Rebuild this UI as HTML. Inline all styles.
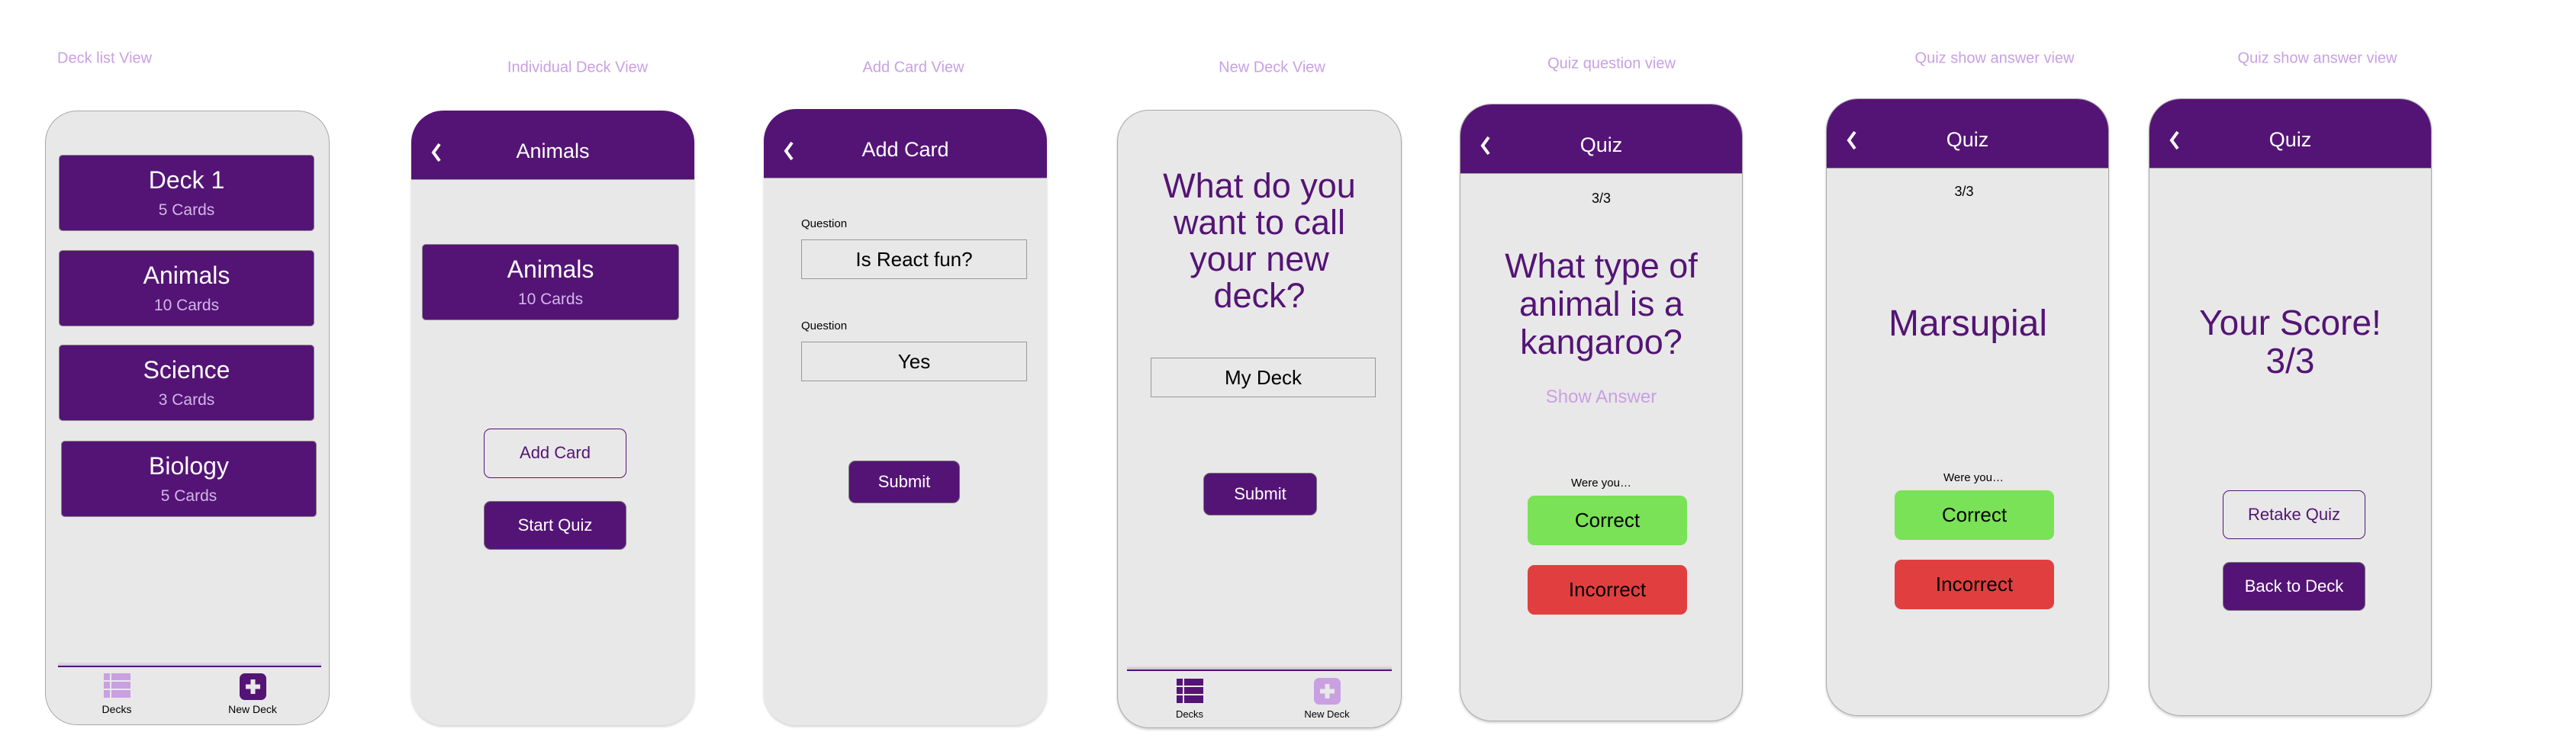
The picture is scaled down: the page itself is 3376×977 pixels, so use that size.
<!DOCTYPE html>
<html><head><meta charset="utf-8"><style>
*{margin:0;padding:0;box-sizing:border-box}
body{width:3376px;height:977px;background:#fff;position:relative;overflow:hidden;font-family:"Liberation Sans",Arial,sans-serif}
.lbl{position:absolute;color:#c9a0e2;font-size:20px;white-space:nowrap;transform:translate(-50%,-50%)}
.ph{position:absolute;background:#e8e8e8;border:1.5px solid #a8a8a8;border-radius:42px;overflow:hidden;box-shadow:0 2px 3px rgba(0,0,0,.18)}
.hd{position:absolute;left:0;top:0;width:100%;background:#541475;border-bottom:1.5px solid #9a9a9a}
.hd .t{position:absolute;left:0;right:0;text-align:center;color:#fff;font-size:27px}
.hd svg{position:absolute;left:25px}
.a{position:absolute}
.c{text-align:center;white-space:nowrap}
.card{position:absolute;background:#541475;border:1px solid #888;border-radius:5px;color:#fff;text-align:center}
.card .t1{position:absolute;left:0;right:0;top:14px;font-size:32px}
.card .t2{position:absolute;left:0;right:0;top:60px;font-size:21px;color:#d3b6ea}
.btn{position:absolute;border-radius:9px;text-align:center;font-size:22px}
.pb{background:#541475;color:#fff;border:1px solid #777}
.ob{border:1.5px solid #541475;color:#541475}
.box{position:absolute;border:1.5px solid #999;text-align:center;font-size:26px;color:#000}
.g{background:#7ae256;color:#000;font-size:26px}
.r{background:#e13f3f;color:#000;font-size:26px}
.pq{color:#541475}
</style></head><body>

<div class="lbl" style="left:75px;top:77px;transform:translate(0,-50%)">Deck list View</div>
<div class="lbl" style="left:757px;top:89px">Individual Deck View</div>
<div class="lbl" style="left:1197px;top:89px">Add Card View</div>
<div class="lbl" style="left:1667px;top:89px">New Deck View</div>
<div class="lbl" style="left:2112px;top:84px">Quiz question view</div>
<div class="lbl" style="left:2614px;top:77px">Quiz show answer view</div>
<div class="lbl" style="left:3037px;top:77px">Quiz show answer view</div>

<!-- Panel 1 -->
<div class="ph" style="left:59px;top:145px;width:373px;height:806px;box-shadow:none">
  <div class="card" style="left:17px;top:57px;width:335px;height:100px"><div class="t1">Deck 1</div><div class="t2">5 Cards</div></div>
  <div class="card" style="left:17px;top:182px;width:335px;height:100px"><div class="t1">Animals</div><div class="t2">10 Cards</div></div>
  <div class="card" style="left:17px;top:306px;width:335px;height:100px"><div class="t1">Science</div><div class="t2">3 Cards</div></div>
  <div class="card" style="left:20px;top:432px;width:335px;height:100px"><div class="t1">Biology</div><div class="t2">5 Cards</div></div>
  <div class="a" style="left:16px;top:722px;width:345px;height:7px;background:linear-gradient(rgba(84,20,117,0),rgba(84,20,117,.25))"></div>
  <div class="a" style="left:16px;top:727px;width:345px;height:2px;background:#541475"></div>
  <svg class="a" style="left:76px;top:737px" width="35" height="32" viewBox="0 0 35 32"><g fill="#c9a0e2"><rect x="0" y="0" width="8" height="9"/><rect x="10" y="0" width="25" height="9"/><rect x="0" y="11" width="8" height="9"/><rect x="10" y="11" width="25" height="9"/><rect x="0" y="22" width="8" height="10"/><rect x="10" y="22" width="25" height="10"/></g></svg>
  <div class="a c" style="left:53px;width:80px;top:776px;font-size:14px">Decks</div>
  <svg class="a" style="left:254px;top:737px" width="35" height="35" viewBox="0 0 35 35"><rect width="35" height="35" rx="7" fill="#541475"/><path d="M17.5 8v19M8 17.5h19" stroke="#e8e8e8" stroke-width="6"/></svg>
  <div class="a c" style="left:221px;width:100px;top:776px;font-size:14px">New Deck</div>
</div>

<!-- Panel 2 -->
<div class="ph" style="left:539px;top:145px;width:371px;height:806px;border:none">
  <div class="hd" style="height:91px"><svg style="top:41px" width="16" height="28" viewBox="0 0 16 28"><path d="M12 3L4 14l8 11" stroke="#fff" stroke-width="4" fill="none"/></svg><div class="t" style="top:38px">Animals</div></div>
  <div class="card" style="left:14px;top:175px;width:337px;height:100px"><div class="t1">Animals</div><div class="t2">10 Cards</div></div>
  <div class="btn ob" style="left:95px;top:417px;width:187px;height:65px;line-height:62px">Add Card</div>
  <div class="btn pb" style="left:95px;top:512px;width:187px;height:64px;line-height:62px">Start Quiz</div>
</div>

<!-- Panel 3 -->
<div class="ph" style="left:1001px;top:143px;width:371px;height:808px;border:none">
  <div class="hd" style="height:91px"><svg style="top:41px" width="16" height="28" viewBox="0 0 16 28"><path d="M12 3L4 14l8 11" stroke="#fff" stroke-width="4" fill="none"/></svg><div class="t" style="top:38px">Add Card</div></div>
  <div class="a" style="left:49px;top:142px;font-size:15px">Question</div>
  <div class="box" style="left:49px;top:171px;width:296px;height:52px;line-height:50px">Is React fun?</div>
  <div class="a" style="left:49px;top:276px;font-size:15px">Question</div>
  <div class="box" style="left:49px;top:305px;width:296px;height:52px;line-height:50px">Yes</div>
  <div class="btn pb" style="left:111px;top:461px;width:146px;height:56px;line-height:54px">Submit</div>
</div>

<!-- Panel 4 -->
<div class="ph" style="left:1464px;top:144px;width:373px;height:811px">
  <div class="a c pq" style="left:0;right:0;top:75px;font-size:45px;line-height:48px">What do you<br>want to call<br>your new<br>deck?</div>
  <div class="box" style="left:43px;top:324px;width:295px;height:52px;line-height:50px">My Deck</div>
  <div class="btn pb" style="left:112px;top:475px;width:149px;height:56px;line-height:54px">Submit</div>
  <div class="a" style="left:12px;top:728px;width:347px;height:6px;background:linear-gradient(rgba(84,20,117,0),rgba(84,20,117,.25))"></div>
  <div class="a" style="left:12px;top:733px;width:347px;height:2px;background:#541475"></div>
  <svg class="a" style="left:77px;top:745px" width="35" height="32" viewBox="0 0 35 32"><g fill="#541475"><rect x="0" y="0" width="8" height="9"/><rect x="10" y="0" width="25" height="9"/><rect x="0" y="11" width="8" height="9"/><rect x="10" y="11" width="25" height="9"/><rect x="0" y="22" width="8" height="10"/><rect x="10" y="22" width="25" height="10"/></g></svg>
  <div class="a c" style="left:54px;width:80px;top:784px;font-size:13px">Decks</div>
  <svg class="a" style="left:257px;top:744px" width="35" height="35" viewBox="0 0 35 35"><rect width="35" height="35" rx="7" fill="#c9a0e2"/><path d="M17.5 8v19M8 17.5h19" stroke="#e8e8e8" stroke-width="6"/></svg>
  <div class="a c" style="left:224px;width:100px;top:784px;font-size:13px">New Deck</div>
</div>

<!-- Panel 5 -->
<div class="ph" style="left:1913px;top:136px;width:371px;height:810px">
  <div class="hd" style="height:91px"><svg style="top:40px" width="16" height="28" viewBox="0 0 16 28"><path d="M12 3L4 14l8 11" stroke="#fff" stroke-width="4" fill="none"/></svg><div class="t" style="top:38px">Quiz</div></div>
  <div class="a c" style="left:0;right:0;top:113px;font-size:18px">3/3</div>
  <div class="a c pq" style="left:0;right:0;top:187px;font-size:45px;line-height:50px">What type of<br>animal is a<br>kangaroo?</div>
  <div class="a c" style="left:0;right:0;top:370px;font-size:24px;color:#c9a0e2">Show Answer</div>
  <div class="a c" style="left:0;right:0;top:488px;font-size:15px">Were you…</div>
  <div class="btn g" style="left:88px;top:513px;width:209px;height:65px;line-height:65px">Correct</div>
  <div class="btn r" style="left:88px;top:604px;width:209px;height:65px;line-height:65px">Incorrect</div>
</div>

<!-- Panel 6 -->
<div class="ph" style="left:2393px;top:129px;width:371px;height:810px">
  <div class="hd" style="height:91px"><svg style="top:40px" width="16" height="28" viewBox="0 0 16 28"><path d="M12 3L4 14l8 11" stroke="#fff" stroke-width="4" fill="none"/></svg><div class="t" style="top:38px">Quiz</div></div>
  <div class="a c" style="left:0;width:360px;top:111px;font-size:18px">3/3</div>
  <div class="a c pq" style="left:0;width:370px;top:267px;font-size:48px">Marsupial</div>
  <div class="a c" style="left:0;width:385px;top:488px;font-size:15px">Were you…</div>
  <div class="btn g" style="left:89px;top:513px;width:209px;height:65px;line-height:65px">Correct</div>
  <div class="btn r" style="left:89px;top:604px;width:209px;height:65px;line-height:65px">Incorrect</div>
</div>

<!-- Panel 7 -->
<div class="ph" style="left:2816px;top:129px;width:371px;height:810px">
  <div class="hd" style="height:91px"><svg style="top:40px" width="16" height="28" viewBox="0 0 16 28"><path d="M12 3L4 14l8 11" stroke="#fff" stroke-width="4" fill="none"/></svg><div class="t" style="top:38px">Quiz</div></div>
  <div class="a c pq" style="left:0;right:0;top:268px;font-size:46px;line-height:50px">Your Score!<br>3/3</div>
  <div class="btn ob" style="left:96px;top:513px;width:187px;height:64px;line-height:61px">Retake Quiz</div>
  <div class="btn pb" style="left:96px;top:607px;width:187px;height:64px;line-height:62px">Back to Deck</div>
</div>

</body></html>
